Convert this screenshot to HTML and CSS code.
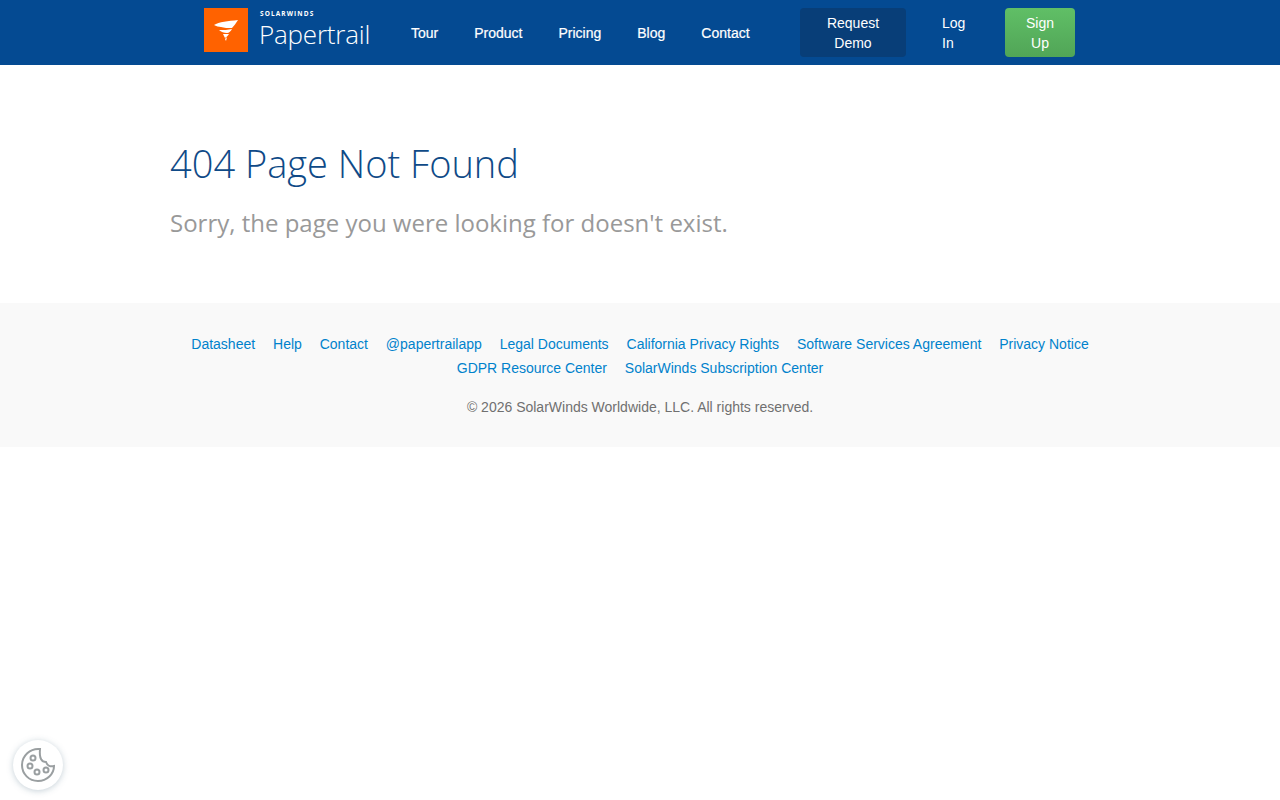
FILE: index.html
```html
<!DOCTYPE html>
<html lang="en">
<head>
    <meta charset="UTF-8">
    <meta name="viewport" content="width=device-width, initial-scale=1.0">
    <title>404 Page Not Found - Papertrail</title>
    <link rel="stylesheet" href="styles.css">
</head>
<body>
    <header class="site-header">
        <a class="logo" href="#">
            <span class="logo-mark">
                <svg width="44" height="44" viewBox="0 0 44 44">
                    <rect width="44" height="44" fill="#ff6200"/>
                    <path d="M10 17 C15 14 24 13 34 12 C32 15 30 18 28 20 C24 20 20 20 17 19 C15 19 12 18 10 17 Z" fill="#fff"/>
                    <path d="M15 22 C20 22 24 22 28 21 C27 23 25 25 23 25 C20 25 17 24 15 22 Z" fill="#fff"/>
                    <path d="M19 26 L25 26 C24 28 22 29 21 30 Z" fill="#fff"/>
                    <path d="M21 31 L23 29 L22 33 Z" fill="#fff"/>
                </svg>
            </span>
            <span class="logo-text">
                <span class="logo-brand">SOLARWINDS</span>
                <span class="logo-name">Papertrail</span>
            </span>
        </a>
        <nav class="main-nav">
            <a href="#">Tour</a>
            <a href="#">Product</a>
            <a href="#">Pricing</a>
            <a href="#">Blog</a>
            <a href="#">Contact</a>
        </nav>
        <div class="nav-actions">
            <a class="btn btn-demo" href="#">Request<br>Demo</a>
            <a class="btn btn-login" href="#">Log<br>In</a>
            <a class="btn btn-signup" href="#">Sign<br>Up</a>
        </div>
    </header>

    <main class="content">
        <h1>404 Page Not Found</h1>
        <h2>Sorry, the page you were looking for doesn't exist.</h2>
    </main>

    <footer class="site-footer">
        <div class="footer-links">
            <a href="#">Datasheet</a>
            <a href="#">Help</a>
            <a href="#">Contact</a>
            <a href="#">@papertrailapp</a>
            <a href="#">Legal Documents</a>
            <a href="#">California Privacy Rights</a>
            <a href="#">Software Services Agreement</a>
            <a href="#">Privacy Notice</a>
            <a href="#">GDPR Resource Center</a>
            <a href="#">SolarWinds Subscription Center</a>
        </div>
        <p class="copyright">© 2026 SolarWinds Worldwide, LLC. All rights reserved.</p>
    </footer>

    <button class="cookie-btn" aria-label="Cookie settings">
        <svg width="36" height="36" viewBox="0 0 36 36" fill="none" stroke="#9a9fa1" stroke-width="2">
            <path d="M20 2 C10 1 2 9 2 18 C2 27 9 34 18 34 C27 34 34 27 34 19 C30 20 27 18 26 15 C22 15 19 12 20 2 Z"/>
            <circle cx="13" cy="11" r="2.5"/>
            <circle cx="10" cy="19" r="2.5"/>
            <circle cx="17" cy="25" r="2.5"/>
            <circle cx="26" cy="23" r="2.5"/>
        </svg>
    </button>
</body>
</html>
```

FILE: styles.css
```css
body {
    margin: 0;
    background: #fff;
    font-family: "Liberation Sans", Arial, sans-serif;
    font-size: 14px;
    color: #333;
}
a {
    text-decoration: none;
}

/* header */
.site-header {
    height: 65px;
    background: #044a92;
    display: flex;
    align-items: flex-start;
    padding-left: 204px;
    box-sizing: border-box;
}
.logo {
    display: flex;
    gap: 11px;
    margin-top: 8px;
    width: 207px;
    color: #fff;
}
.logo-mark {
    display: block;
    height: 44px;
}
.logo-text {
    display: flex;
    flex-direction: column;
}
.logo-brand {
    font-family: "Open Sans", sans-serif;
    font-size: 6.5px;
    font-weight: 700;
    letter-spacing: 1.1px;
    line-height: 9px;
    margin-top: 1px;
    margin-left: 1px;
}
.logo-name {
    font-family: "Open Sans", sans-serif;
    font-size: 26px;
    font-weight: 300;
    line-height: 32px;
    letter-spacing: -0.2px;
}
.main-nav {
    display: flex;
    gap: 36px;
    margin-top: 24px;
    width: 389px;
}
.main-nav a {
    color: #fff;
    line-height: 18px;
    font-weight: 500;
    -webkit-text-stroke: 0.2px #fff;
}
.nav-actions {
    display: flex;
    margin-top: 8px;
}
.btn {
    display: block;
    box-sizing: border-box;
    height: 49px;
    padding: 5px 0;
    border-radius: 4px;
    color: #fff;
    line-height: 20px;
    text-align: center;
}
.btn-demo {
    width: 106px;
    background: #083e78;
}
.btn-login {
    width: 99px;
    padding-left: 36px;
    text-align: left;
}
.btn-signup {
    width: 70px;
    background: linear-gradient(#60bf66, #51a557);
}

/* main content */
.content {
    height: 238px;
    box-sizing: border-box;
    padding: 72px 170px 0;
}
h1 {
    margin: 0;
    font-family: "Open Sans", sans-serif;
    font-size: 38px;
    font-weight: 300;
    line-height: 52px;
    color: #0f4a87;
}
h2 {
    margin: 18px 0 0;
    font-family: "Open Sans", sans-serif;
    font-size: 24px;
    font-weight: 400;
    line-height: 32px;
    color: #999;
}

/* footer */
.site-footer {
    height: 144px;
    box-sizing: border-box;
    background: #f9f9f9;
    padding-top: 29px;
    text-align: center;
}
.footer-links {
    width: 920px;
    margin: 0 auto;
    line-height: 24px;
}
.footer-links a {
    color: #0082cc;
    margin: 0 7px;
}
.copyright {
    margin: 15px 0 0;
    line-height: 24px;
    color: #707070;
}

/* cookie button */
.cookie-btn {
    position: fixed;
    left: 13px;
    bottom: 10px;
    width: 50px;
    height: 50px;
    padding: 0;
    border: 0;
    border-radius: 50%;
    background: #fff;
    box-shadow: 0 1px 6px rgba(90, 120, 140, 0.35);
    display: flex;
    align-items: center;
    justify-content: center;
}
```
